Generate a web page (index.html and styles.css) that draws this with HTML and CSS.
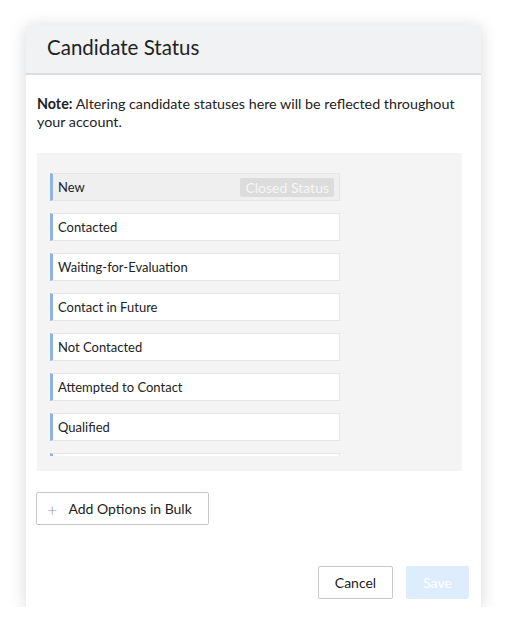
FILE: index.html
```html
<!DOCTYPE html>
<html>
<head>
<meta charset="utf-8">
<link rel="stylesheet" href="styles.css">
</head>
<body>
<div class="dialog">
  <div class="header"><h1 class="title">Candidate Status</h1></div>
  <div class="body">
    <p class="note"><b>Note:</b> Altering candidate statuses here will be reflected throughout your account.</p>
    <div class="panel">
      <div class="list">
        <div class="row row-new"><span>New</span><span class="badge">Closed Status</span></div>
        <div class="row"><span>Contacted</span></div>
        <div class="row"><span>Waiting-for-Evaluation</span></div>
        <div class="row"><span>Contact in Future</span></div>
        <div class="row"><span>Not Contacted</span></div>
        <div class="row"><span>Attempted to Contact</span></div>
        <div class="row"><span>Qualified</span></div>
        <div class="row row-partial"></div>
      </div>
    </div>
    <button class="bulk"><span class="plus">+</span>Add Options in Bulk</button>
  </div>
  <div class="footer">
    <button class="btn cancel">Cancel</button>
    <button class="btn save">Save</button>
  </div>
</div>
</body>
</html>
```
FILE: styles.css
```css
html, body { margin: 0; padding: 0; background: #fff; }
body { font-family: Lato, "Liberation Sans", sans-serif; color: #222; }
.dialog {
  margin: 25px 0 0 26px;
  width: 455px;
  height: 582px;
  background: #fff;
  box-shadow: 0 2px 16px rgba(0,0,0,0.16);
  display: flex;
  flex-direction: column;
}
.header {
  height: 48px;
  background: #f1f2f4;
  border-bottom: 2px solid #dcdde0;
  display: flex;
  align-items: center;
  padding-left: 21px;
}
.title { margin: 0 0 5px; font-size: 20.5px; font-weight: 400; color: #222; }
.body { padding: 20px 0 0 11px; flex: 1; }
.note { margin: 0; font-size: 14.3px; line-height: 18px; width: 432px; }
.panel {
  margin-top: 22px;
  width: 425px;
  background: #f4f4f4;
  padding: 20px 0 15px 13px;
  box-sizing: border-box;
}
.list {
  height: 283px;
  overflow: hidden;
  display: flex;
  flex-direction: column;
  gap: 12px;
}
.row {
  flex: none;
  width: 290px;
  height: 28px;
  box-sizing: border-box;
  background: #fff;
  border: 1px solid #e6e6e6;
  border-left: 3px solid #8db3e0;
  display: flex;
  align-items: center;
  justify-content: space-between;
  padding: 0 5px 0 5px;
  font-size: 13px;
  color: #222;
}
.row-new { background: #efefef; }
.badge {
  background: #dcdcdc;
  color: #f6f6f6;
  font-size: 14px;
  height: 19px;
  line-height: 19px;
  padding: 0 5px;
  border-radius: 2px;
}
.bulk {
  margin: 21px 0 0 -1px;
  width: 173px;
  height: 33px;
  background: #fff;
  border: 1px solid #c8c8c8;
  border-radius: 2px;
  font-family: inherit;
  font-size: 14px;
  color: #222;
  display: flex;
  align-items: center;
  padding: 0 0 0 10px;
}
.plus { color: #999; font-size: 18px; margin-right: 11px; font-weight: 300; }
.footer {
  display: flex;
  justify-content: flex-end;
  gap: 13px;
  padding: 0 12px 8px 0;
}
.btn {
  height: 33px;
  font-family: inherit;
  font-size: 14px;
  border-radius: 2px;
}
.cancel { width: 75px; background: #fff; border: 1px solid #c8c8c8; color: #222; }
.save { width: 63px; background: #deedfd; border: 1px solid #deedfd; color: #fff; }
```
